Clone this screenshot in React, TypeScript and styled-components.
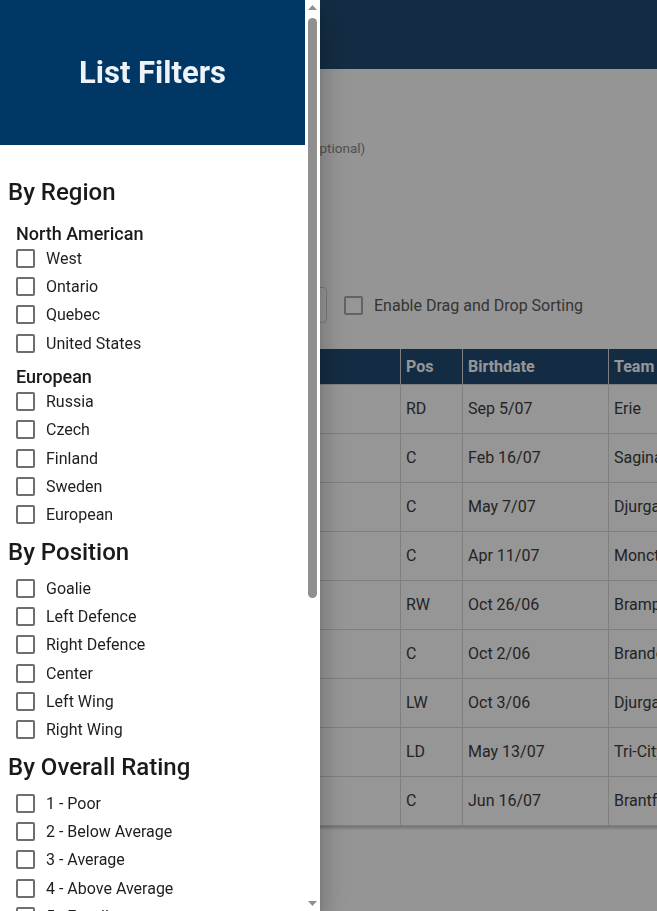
import React from "react";
import styled, { createGlobalStyle } from "styled-components";

const Global = createGlobalStyle`
  html, body { margin: 0; padding: 0; height: 100%; overflow: hidden; }
  body { font-family: Roboto, "Noto Sans", "Liberation Sans", sans-serif; background: #fdfdfd; }
  * { box-sizing: border-box; }
`;

const Page = styled.div`
  width: 100vw;
  height: 100vh;
  overflow: hidden;
  background: #fdfdfd;
`;

const AppBar = styled.header`
  height: 69px;
  background: #224c73;
`;

const Main = styled.main`
  padding: 24px 0 0 24px;
`;

const FieldRow = styled.div`
  display: flex;
  align-items: center;
  gap: 12px;
  margin-top: 46px;
`;

const TextInput = styled.input`
  width: 232px;
  height: 18px;
  border: none;
  border-bottom: 1px solid #bbb;
  background: transparent;
  padding: 0;
`;

const Helper = styled.span`
  font-size: 13.5px;
  line-height: 18px;
  color: #8a8a8a;
`;

const Toolbar = styled.div`
  display: flex;
  align-items: center;
  margin-top: 130px;
  height: 36px;
`;

const Button = styled.button<{ $w: number; $outlined?: boolean }>`
  width: ${(p) => p.$w}px;
  height: 36px;
  margin-right: 12px;
  border-radius: 4px;
  border: 1px solid ${(p) => (p.$outlined ? "#d0d0d0" : "#224c73")};
  background: ${(p) => (p.$outlined ? "#ffffff" : "#224c73")};
`;

const CheckLabel = styled.label<{ $dim?: boolean }>`
  display: flex;
  align-items: center;
  gap: 11px;
  margin-left: ${(p) => (p.$dim ? 5 : 0)}px;
  font-size: 16px;
  line-height: 19px;
  color: ${(p) => (p.$dim ? "#5a5a5a" : "#1e1e1e")};
`;

const Box = styled.span<{ $color?: string }>`
  width: 19px;
  height: 19px;
  flex: none;
  border: 2px solid ${(p) => p.$color || "#6e6e6e"};
  border-radius: 2px;
  background: #fff;
`;

const Table = styled.table`
  margin-top: 26px;
  border-collapse: collapse;
  table-layout: fixed;
  width: 1000px;
  background: #fff;
  box-shadow: 0 2px 3px rgba(0, 0, 0, 0.25);
`;

const Th = styled.th<{ $w: number }>`
  width: ${(p) => p.$w}px;
  height: 35px;
  padding: 0 5px;
  text-align: left;
  background: #224c73;
  color: #fff;
  font-size: 16px;
  font-weight: 700;
  border: 1px solid #d8d8d8;
  border-top: none;
  white-space: nowrap;
  overflow: hidden;
`;

const Td = styled.td`
  height: 49px;
  padding: 0 5px;
  font-size: 16px;
  color: #3d3d3d;
  border: 1px solid #d8d8d8;
  white-space: nowrap;
  overflow: hidden;
`;

const Backdrop = styled.div`
  position: fixed;
  inset: 0;
  background: rgba(0, 0, 0, 0.41);
`;

const Drawer = styled.aside`
  position: fixed;
  top: 0;
  left: 0;
  width: 320px;
  height: 100vh;
  display: flex;
  background: #fff;
  box-shadow: 0 8px 10px -5px rgba(0, 0, 0, 0.2), 0 16px 24px 2px rgba(0, 0, 0, 0.14),
    0 6px 30px 5px rgba(0, 0, 0, 0.12);
`;

const DrawerScroll = styled.div`
  width: 305px;
  height: 100%;
  overflow: hidden;
`;

const Rail = styled.div`
  width: 15px;
  height: 100%;
  display: flex;
  flex-direction: column;
  background: #fff;
`;

const RailButton = styled.div`
  height: 15px;
  flex: none;
  display: flex;
  align-items: center;
  justify-content: center;
`;

const RailTrack = styled.div`
  flex: 1;
  padding: 3px 3px 0 3px;
`;

const Thumb = styled.div<{ $h: number }>`
  width: 9px;
  height: ${(p) => p.$h}px;
  border-radius: 5px;
  background: #8f8f8f;
`;

const DrawerHeader = styled.div`
  height: 145px;
  background: #003764;
  display: flex;
  align-items: center;
  justify-content: center;
`;

const DrawerTitle = styled.h2`
  margin: 0;
  font-size: 31px;
  font-weight: 700;
  color: #eef3f9;
`;

const DrawerBody = styled.div`
  padding: 24px 8px 45px;
`;

const SectionTitle = styled.h3`
  margin: 9px 0 8px;
  font-size: 24px;
  line-height: 28px;
  font-weight: 500;
  color: #1a1a1a;
`;

const Group = styled.div`
  display: flow-root;
  padding-left: 8px;
`;

const GroupTitle = styled.h4`
  margin: 9px 0 0;
  font-size: 18px;
  line-height: 21px;
  font-weight: 500;
  color: #1a1a1a;
`;

const Item = styled.div`
  height: 28.33px;
  display: flex;
  align-items: center;
`;

type Section = { title: string; groups: { title?: string; items: string[] }[] };

const sections: Section[] = [
  {
    title: "By Region",
    groups: [
      { title: "North American", items: ["West", "Ontario", "Quebec", "United States"] },
      { title: "European", items: ["Russia", "Czech", "Finland", "Sweden", "European"] },
    ],
  },
  {
    title: "By Position",
    groups: [{ items: ["Goalie", "Left Defence", "Right Defence", "Center", "Left Wing", "Right Wing"] }],
  },
  {
    title: "By Overall Rating",
    groups: [
      { items: ["1 - Poor", "2 - Below Average", "3 - Average", "4 - Above Average", "5 - Excellent"] },
    ],
  },
  {
    title: "By Draft Year",
    groups: [{ items: ["2024", "2025", "2026", "2027", "2028", "2029"] }],
  },
  {
    title: "By Status",
    groups: [{ items: ["Drafted", "Undrafted", "Signed", "Unsigned", "Injured"] }],
  },
];

const rows = [
  ["RD", "Sep 5/07", "Erie"],
  ["C", "Feb 16/07", "Saginaw"],
  ["C", "May 7/07", "Djurgardens"],
  ["C", "Apr 11/07", "Moncton"],
  ["RW", "Oct 26/06", "Brampton"],
  ["C", "Oct 2/06", "Brandon"],
  ["LW", "Oct 3/06", "Djurgardens"],
  ["LD", "May 13/07", "Tri-City"],
  ["C", "Jun 16/07", "Brantford"],
];

const Arrow = ({ down }: { down?: boolean }) => (
  <svg width="11" height="7" viewBox="0 0 11 7">
    <path d={down ? "M1 1 L5.5 6 L10 1 Z" : "M1 6 L5.5 1 L10 6 Z"} fill="#8f8f8f" />
  </svg>
);

export default function App() {
  return (
    <>
      <Global />
      <Page>
        <AppBar />
        <Main>
          <FieldRow>
            <TextInput aria-label="List notes" />
            <Helper>Notes (optional)</Helper>
          </FieldRow>
          <Toolbar>
            <Button $w={140} aria-label="Add player" />
            <Button $w={151} $outlined aria-label="Filters" />
            <CheckLabel $dim>
              <Box $color="#a8a8a8" />
              Enable Drag and Drop Sorting
            </CheckLabel>
          </Toolbar>
          <Table>
            <thead>
              <tr>
                <Th $w={376} aria-label="Player"></Th>
                <Th $w={62}>Pos</Th>
                <Th $w={146}>Birthdate</Th>
                <Th $w={150}>Team</Th>
                <Th $w={266}>League</Th>
              </tr>
            </thead>
            <tbody>
              {rows.map((r, i) => (
                <tr key={i}>
                  <Td></Td>
                  <Td>{r[0]}</Td>
                  <Td>{r[1]}</Td>
                  <Td>{r[2]}</Td>
                  <Td></Td>
                </tr>
              ))}
            </tbody>
          </Table>
        </Main>
      </Page>
      <Backdrop />
      <Drawer>
        <DrawerScroll>
          <DrawerHeader>
            <DrawerTitle>List Filters</DrawerTitle>
          </DrawerHeader>
          <DrawerBody>
            {sections.map((s) => (
              <div key={s.title}>
                <SectionTitle>{s.title}</SectionTitle>
                {s.groups.map((g, i) => (
                  <Group key={i}>
                    {g.title && <GroupTitle>{g.title}</GroupTitle>}
                    {g.items.map((it) => (
                      <Item key={it}>
                        <CheckLabel>
                          <Box />
                          {it}
                        </CheckLabel>
                      </Item>
                    ))}
                  </Group>
                ))}
              </div>
            ))}
          </DrawerBody>
        </DrawerScroll>
        <Rail>
          <RailButton>
            <Arrow />
          </RailButton>
          <RailTrack>
            <Thumb $h={580} />
          </RailTrack>
          <RailButton>
            <Arrow down />
          </RailButton>
        </Rail>
      </Drawer>
    </>
  );
}
